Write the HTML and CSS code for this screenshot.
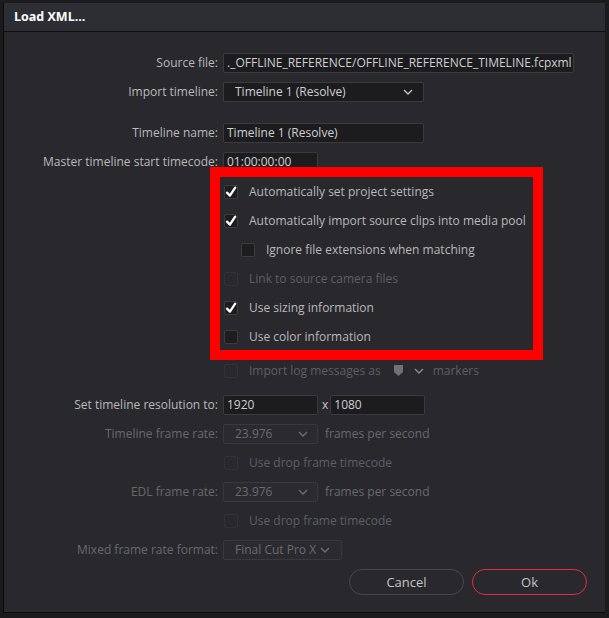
FILE: index.html
```html
<!DOCTYPE html>
<html>
<head>
<meta charset="utf-8">
<link rel="stylesheet" href="styles.css">
</head>
<body>
<div class="dialog">
  <div class="titlebar">Load XML...</div>
  <div class="content">
    <div class="row">
      <div class="label">Source file:</div>
      <div class="field input wide">._OFFLINE_REFERENCE/OFFLINE_REFERENCE_TIMELINE.fcpxml</div>
    </div>
    <div class="row">
      <div class="label">Import timeline:</div>
      <div class="field select mid">Timeline 1 (Resolve)<svg class="chev" viewBox="0 0 10 6"><path d="M1 1 L5 5 L9 1" fill="none" stroke="#c8c8c8" stroke-width="1.3"/></svg></div>
    </div>
    <div class="row spaced">
      <div class="label">Timeline name:</div>
      <div class="field input mid">Timeline 1 (Resolve)</div>
    </div>
    <div class="row">
      <div class="label">Master timeline start timecode:</div>
      <div class="field input small">01:00:00:00</div>
    </div>
    <div class="group">
      <div class="crow"><span class="cb on"><svg viewBox="0 0 14 14"><path d="M3 7.6 L5.9 10.6 L11.2 2.6" fill="none" stroke="#fff" stroke-width="2.3" stroke-linecap="round" stroke-linejoin="round"/></svg></span><span class="ctext">Automatically set project settings</span></div>
      <div class="crow"><span class="cb on"><svg viewBox="0 0 14 14"><path d="M3 7.6 L5.9 10.6 L11.2 2.6" fill="none" stroke="#fff" stroke-width="2.3" stroke-linecap="round" stroke-linejoin="round"/></svg></span><span class="ctext">Automatically import source clips into media pool</span></div>
      <div class="crow indent"><span class="cb"></span><span class="ctext">Ignore file extensions when matching</span></div>
      <div class="crow dis"><span class="cb"></span><span class="ctext">Link to source camera files</span></div>
      <div class="crow"><span class="cb on"><svg viewBox="0 0 14 14"><path d="M3 7.6 L5.9 10.6 L11.2 2.6" fill="none" stroke="#fff" stroke-width="2.3" stroke-linecap="round" stroke-linejoin="round"/></svg></span><span class="ctext">Use sizing information</span></div>
      <div class="crow"><span class="cb"></span><span class="ctext">Use color information</span></div>
    </div>
    <div class="row gap6">
      <div class="label"></div>
      <div class="crow dis inline"><span class="cb"></span><span class="ctext">Import log messages as</span>
        <svg class="shield" viewBox="0 0 9 11"><path d="M0 0 H9 V7 L4.5 11 L0 7 Z" fill="#707075"/></svg>
        <svg class="chev2" viewBox="0 0 10 6"><path d="M1 1 L5 5 L9 1" fill="none" stroke="#8a8a8e" stroke-width="1.4"/></svg>
        <span class="ctext">markers</span></div>
    </div>
    <div class="row gap5">
      <div class="label">Set timeline resolution to:</div>
      <div class="field input small">1920</div>
      <span class="x">x</span>
      <div class="field input small">1080</div>
    </div>
    <div class="row disabled">
      <div class="label">Timeline frame rate:</div>
      <div class="field select small">23.976<svg class="chev" viewBox="0 0 10 6"><path d="M1 1 L5 5 L9 1" fill="none" stroke="#707074" stroke-width="1.3"/></svg></div>
      <span class="after">frames per second</span>
    </div>
    <div class="row disabled">
      <div class="label"></div>
      <div class="crow dis inline"><span class="cb"></span><span class="ctext">Use drop frame timecode</span></div>
    </div>
    <div class="row disabled">
      <div class="label">EDL frame rate:</div>
      <div class="field select small">23.976<svg class="chev" viewBox="0 0 10 6"><path d="M1 1 L5 5 L9 1" fill="none" stroke="#707074" stroke-width="1.3"/></svg></div>
      <span class="after">frames per second</span>
    </div>
    <div class="row disabled">
      <div class="label"></div>
      <div class="crow dis inline"><span class="cb"></span><span class="ctext">Use drop frame timecode</span></div>
    </div>
    <div class="row disabled">
      <div class="label">Mixed frame rate format:</div>
      <div class="field select fcp">Final Cut Pro X<svg class="chev" viewBox="0 0 10 6"><path d="M1 1 L5 5 L9 1" fill="none" stroke="#707074" stroke-width="1.3"/></svg></div>
    </div>
    <div class="buttons">
      <div class="btn">Cancel</div>
      <div class="btn ok">Ok</div>
    </div>
  </div>
</div>
</body>
</html>
```

FILE: styles.css
```css
html, body {
  margin: 0;
  padding: 0;
}
body {
  background: #1b1b1e;
  width: 609px;
  height: 618px;
  overflow: hidden;
  font-family: "Open Sans", "Noto Sans", sans-serif;
  font-size: 12px;
  color: #b9b9bb;
}
.dialog {
  margin: 3px 0 0 3px;
  width: 602px;
  height: 610px;
  background: #28282d;
  border-left: 1px solid #0b0b0c;
  border-bottom: 1px solid #0b0b0c;
  box-sizing: border-box;
}
.titlebar {
  height: 28px;
  background: #2d2e33;
  border-bottom: 1px solid #0e0e10;
  color: #ffffff;
  font-weight: bold;
  font-size: 12.5px;
  line-height: 28px;
  padding-left: 10px;
}
.content {
  padding-top: 16px;
}
.row {
  display: flex;
  align-items: center;
  height: 29px;
}
.row.spaced { margin-top: 12px; }
.row.gap5 { margin-top: 5px; }
.row.gap6 { margin-top: 6px; }
.label {
  width: 214px;
  flex: none;
  text-align: right;
  margin-right: 5px;
  white-space: nowrap;
}
.field {
  height: 20px;
  box-sizing: border-box;
  background: #1c1c1f;
  border: 1px solid #3a3a3f;
  border-radius: 2px;
  color: #cfcfd1;
  line-height: 18px;
  white-space: nowrap;
  overflow: hidden;
  display: flex;
  align-items: center;
}
.input { padding-left: 3px; }
.select { padding-left: 11px; position: relative; }
.wide { width: 351px; }
.mid { width: 201px; }
.small { width: 95px; }
.fcp { width: 119px; }
.chev {
  width: 10px;
  height: 6px;
  margin-left: auto;
  margin-right: 10px;
}
.select.small .chev, .select.fcp .chev { margin-right: 9px; }
.select.fcp .chev { margin-left: 4px; }
.x {
  margin: 0 2px 0 4px;
  color: #c8c8c8;
}
.after { margin-left: 7px; }
.disabled { color: #68686c; }
.disabled .field {
  background: #2a2a2f;
  border-color: #38383d;
  color: #6c6c70;
}
.group {
  margin-left: 216px;
  margin-top: 1px;
  width: 313px;
  height: 173px;
  outline: 10px solid #ff0000;
  box-sizing: border-box;
  padding-left: 4px;
  display: flex;
  flex-direction: column;
}
.crow {
  display: flex;
  align-items: center;
  height: 29px;
  flex: none;
}
.crow.inline { height: auto; margin-left: 1px; }
.crow.indent { padding-left: 17px; }
.cb {
  width: 14px;
  height: 14px;
  box-sizing: border-box;
  border: 1px solid #3b3b40;
  background: #1d1d20;
  border-radius: 2px;
  flex: none;
  display: inline-flex;
  margin-right: 11px;
  position: relative;
}
.cb svg {
  width: 14px;
  height: 14px;
  margin: -1px;
}
.crow.dis .cb {
  background: #29292d;
  border-color: #333337;
}
.crow.dis { color: #5f5f63; }
.shield {
  width: 9px;
  height: 11px;
  margin: 0 11px 0 13px;
}
.chev2 {
  width: 10px;
  height: 6px;
  margin-right: 9px;
}
.buttons {
  display: flex;
  gap: 8px;
  margin-top: 5px;
  margin-left: 345px;
}
.btn {
  width: 115px;
  height: 26px;
  box-sizing: border-box;
  border: 1px solid #46464d;
  border-radius: 13px;
  text-align: center;
  line-height: 24px;
  font-size: 13px;
  color: #c4c4c6;
}
.btn.ok {
  border-color: #e0303a;
}
```
